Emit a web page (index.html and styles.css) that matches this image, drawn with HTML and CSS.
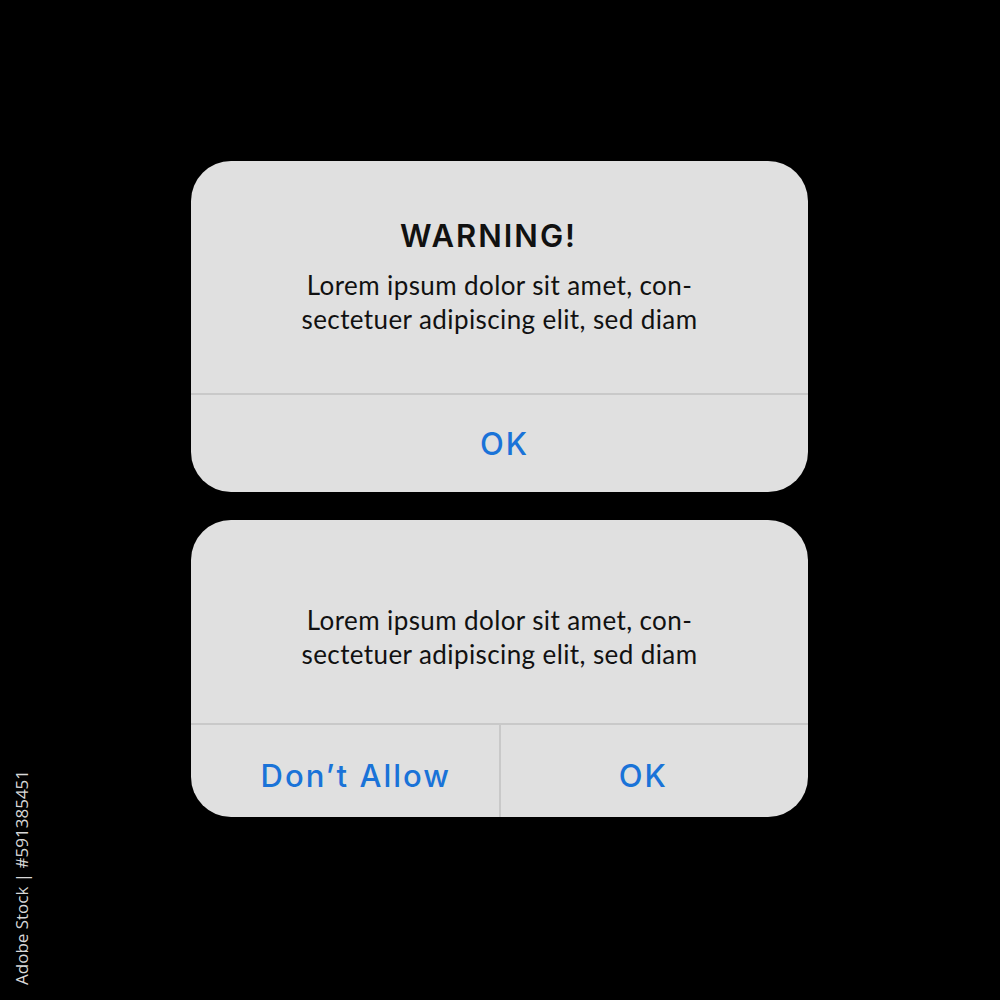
FILE: index.html
```html
<!DOCTYPE html>
<html>
  <head>
    <meta charset="utf-8" />
    <title>Alert dialogs</title>
    <link rel="stylesheet" href="styles.css">
  </head>
  <body>
    <main class="stack">
      <div class="alert">
        <div class="alert-body alert-body--titled">
          <h2 class="alert-title">WARNING!</h2>
          <p class="alert-text">Lorem ipsum dolor sit amet, con-<br />sectetuer adipiscing elit, sed diam</p>
        </div>
        <div class="alert-actions">
          <button class="alert-btn alert-btn--single">OK</button>
        </div>
      </div>

      <div class="alert alert--double">
        <div class="alert-body alert-body--plain">
          <p class="alert-text">Lorem ipsum dolor sit amet, con-<br />sectetuer adipiscing elit, sed diam</p>
        </div>
        <div class="alert-actions">
          <button class="alert-btn alert-btn--left">Don’t Allow</button>
          <button class="alert-btn alert-btn--right">OK</button>
        </div>
      </div>
    </main>

    <div class="stock-id">Adobe Stock | #591385451</div>
  </body>
</html>
```

FILE: styles.css
```css
html,
body {
  margin: 0;
  padding: 0;
}
body {
  width: 1000px;
  height: 1000px;
  background: #000;
  overflow: hidden;
  position: relative;
}
.stack {
  display: flex;
  flex-direction: column;
  gap: 28px;
  padding: 161px 0 0 191px;
}
.alert {
  width: 617px;
  background: #e0e0e0;
  border-radius: 40px;
  overflow: hidden;
  display: flex;
  flex-direction: column;
}
.alert-body {
  display: flex;
  flex-direction: column;
  align-items: center;
  border-bottom: 2px solid #c9c9c9;
  box-sizing: border-box;
}
.alert-body--titled {
  height: 234px;
  padding-top: 57px;
}
.alert-body--plain {
  height: 205px;
  padding-top: 83px;
}
.alert-title {
  margin: 0 0 14px 0;
  padding-right: 22px;
  font-family: Inter, "DejaVu Sans", sans-serif;
  font-weight: 600;
  font-size: 31px;
  line-height: 36px;
  letter-spacing: 2px;
  color: #111;
}
.alert-text {
  margin: 0;
  font-family: Lato, "Liberation Sans", sans-serif;
  font-size: 26px;
  line-height: 34px;
  letter-spacing: 0.4px;
  text-align: center;
  color: #111;
}
.alert-actions {
  display: flex;
  height: 97px;
}
.alert--double .alert-actions {
  height: 92px;
  padding-top: 8px;
  box-sizing: border-box;
}
.alert-btn {
  flex: 1;
  border: 0;
  margin: 0;
  padding: 0;
  background: transparent;
  font-family: Inter, "DejaVu Sans", sans-serif;
  font-weight: 500;
  font-size: 31px;
  letter-spacing: 2px;
  color: #1a73d8;
}
.alert-btn--single {
  padding-left: 10px;
}
.alert-btn--left {
  border-right: 2px solid #c9c9c9;
  margin-top: -8px;
  padding-top: 8px;
  padding-left: 22px;
}
.alert-btn--right {
  padding-right: 22px;
}
/* image id running up the left edge */
.stock-id {
  position: absolute;
  left: 12px;
  top: 985px;
  transform: rotate(-90deg);
  transform-origin: 0 0;
  font-family: "Open Sans", sans-serif;
  font-size: 17px;
  line-height: 20px;
  color: #d8d8d8;
  white-space: nowrap;
}
```
